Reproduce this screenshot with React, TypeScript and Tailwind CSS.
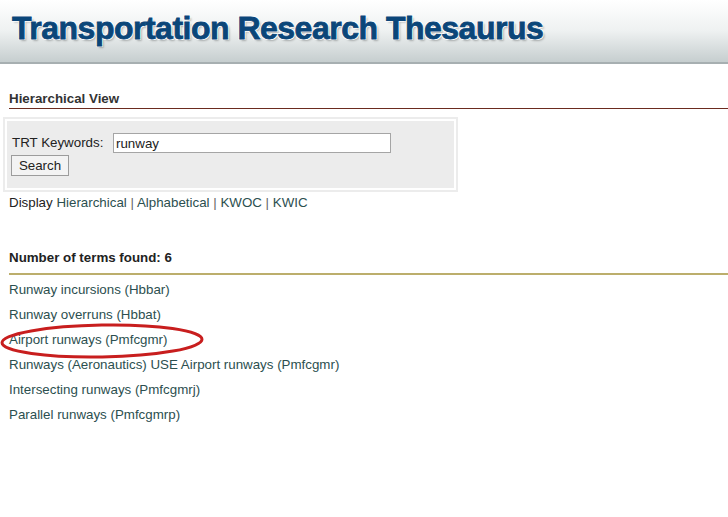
import React from "react";

const terms = [
  "Runway incursions (Hbbar)",
  "Runway overruns (Hbbat)",
  "Airport runways (Pmfcgmr)",
  "Runways (Aeronautics) USE Airport runways (Pmfcgmr)",
  "Intersecting runways (Pmfcgmrj)",
  "Parallel runways (Pmfcgmrp)",
];

export default function App() {
  return (
    <div className="min-h-[517px] bg-white text-[13.33px] text-[#222] font-['Liberation_Sans',Arial,sans-serif]">
      {/* header banner */}
      <div className="h-[64px] border-b-2 border-[#a7afb1] bg-gradient-to-b from-[#ffffff] via-[#eef1f1] to-[#c6cecf] pl-[12px] pt-[10px]">
        <h1 className="text-[32px] leading-[36px] font-black tracking-[-0.5px] text-[#0b4679] [-webkit-text-stroke:0.8px_#0b4679] [text-shadow:1px_1px_0_#fff,-1px_-1px_0_#fff,1px_-1px_0_#fff,-1px_1px_0_#fff,2px_2px_2px_rgba(0,0,0,0.25)]">
          Transportation Research Thesaurus
        </h1>
      </div>

      <div className="pl-[9px]">
        <h2 className="mt-[27px] border-b border-[#6b2b1f] pb-[1px] text-[13.33px] font-bold leading-[16px] text-[#333]">
          Hierarchical View
        </h2>
      </div>

      {/* search box */}
      <div className="ml-[3px] mt-[8px] w-[455px] bg-[#ececec] p-[2px]">
        <div className="border-2 border-white bg-[#ececec] px-[5px] pt-[12px] pb-[12px]">
          <div className="flex items-center">
            <span className="w-[101px] leading-[20px]">TRT Keywords:</span>
            <input
              defaultValue="runway"
              className="h-[20px] w-[278px] border border-[#a5a5a5] bg-white px-[2px] text-[13.33px] text-[#222] outline-none"
            />
          </div>
          <button className="mt-[2px] h-[21px] w-[58px] -ml-[1px] border border-[#9c9c9c] bg-[#f3f3f3] text-[13.33px] leading-[18px] text-[#222]">
            Search
          </button>
        </div>
      </div>

      <div className="pl-[9px]">
        <p className="mt-[3px] leading-[16px]">
          Display <a className="text-[#2c4f4f]">Hierarchical</a> <span className="text-[#666]">|</span>{" "}
          <a className="text-[#2c4f4f]">Alphabetical</a> <span className="text-[#666]">|</span>{" "}
          <a className="text-[#2c4f4f]">KWOC</a> <span className="text-[#666]">|</span>{" "}
          <a className="text-[#2c4f4f]">KWIC</a>
        </p>

        <h2 className="mt-[39px] border-b-2 border-[#bcae6c] pb-[7px] text-[13.33px] font-bold leading-[16px] text-[#222]">
          Number of terms found: 6
        </h2>

        <ul className="relative mt-[2px]">
          {terms.map((t) => (
            <li key={t} className="leading-[25px] text-[#2c4f4f]">
              {t}
            </li>
          ))}
          {/* hand-drawn highlight around the third term */}
          <svg
            className="pointer-events-none absolute left-[-9px] top-[45px]"
            width="212"
            height="40"
            viewBox="0 0 212 40"
          >
            <ellipse
              cx="102"
              cy="19"
              rx="100"
              ry="16"
              fill="none"
              stroke="#c81e1e"
              strokeWidth="3"
              transform="rotate(-1 102 19)"
            />
          </svg>
        </ul>
      </div>
    </div>
  );
}
